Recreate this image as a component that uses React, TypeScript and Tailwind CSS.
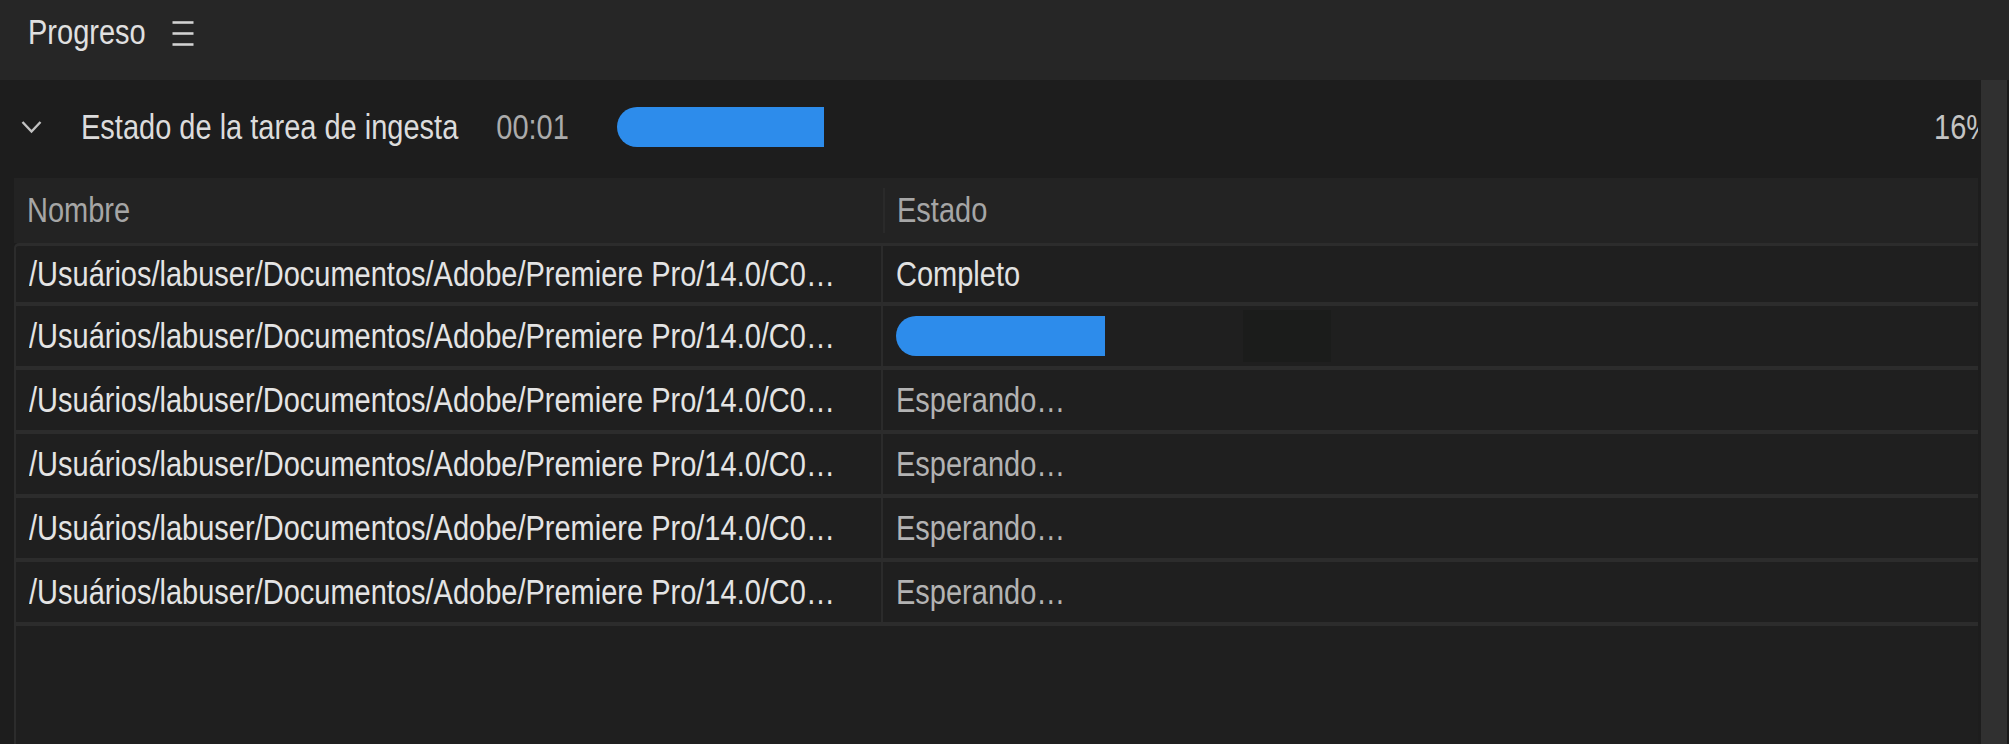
import React from "react";

const FONT = "font-['Liberation_Sans',Arial,sans-serif]";

const PATH = "/Usuários/labuser/Documentos/Adobe/Premiere Pro/14.0/C0…";

// the shot is horizontally squeezed, so glyphs are stretched a bit upward
const TXT = "inline-block scale-y-[1.2]";

type Row = { status: "done" | "running" | "waiting" };

const rows: Row[] = [
  { status: "done" },
  { status: "running" },
  { status: "waiting" },
  { status: "waiting" },
  { status: "waiting" },
  { status: "waiting" },
];

function MenuIcon() {
  return (
    <svg width="22" height="26" viewBox="0 0 22 26" className="mt-[2px]">
      <g stroke="#d2d2d2" strokeWidth="2.6" strokeLinecap="butt">
        <line x1="0.5" y1="2.5" x2="21.5" y2="2.5" />
        <line x1="0.5" y1="13.5" x2="21.5" y2="13.5" />
        <line x1="0.5" y1="24.5" x2="21.5" y2="24.5" />
      </g>
    </svg>
  );
}

function Chevron() {
  return (
    <svg width="21" height="14" viewBox="0 0 21 14" className="shrink-0">
      <polyline points="1.5,2 10.5,11.5 19.5,2" fill="none" stroke="#c2c2c2" strokeWidth="2.4" />
    </svg>
  );
}

function StatusCell({ status }: Row) {
  if (status === "done") return <span className={`${TXT} text-[#e2e2e2]`}>Completo</span>;
  if (status === "running")
    return (
      <div className="flex items-center">
        <div className="w-[209px] h-[40px] rounded-l-full bg-[#2d8ceb]" />
        {/* faint darker block in the shot */}
        <div className="ml-[138px] w-[88px] h-[52px] bg-[#1b1c1b]" />
      </div>
    );
  return <span className={`${TXT} text-[#b3b3b3]`}>Esperando…</span>;
}

export default function App() {
  return (
    <div className={`w-[2009px] h-[744px] flex flex-col overflow-hidden bg-[#1d1d1d] ${FONT} text-[29px] leading-none`}>
      {/* panel tab bar */}
      <div className="h-[80px] shrink-0 flex items-start pt-[18px] pl-[28px] bg-[#262626]">
        <span className={`${TXT} text-[#e0e0e0]`}>Progreso</span>
        <div className="ml-[26px]">
          <MenuIcon />
        </div>
      </div>

      <div className="flex-1 flex min-h-0">
        <div className="w-[1981px] shrink-0 flex flex-col overflow-hidden pr-[3px]">
          {/* task header */}
          <div className="h-[98px] shrink-0 flex items-center pl-[21px] pb-[4px] whitespace-nowrap">
            <Chevron />
            <span className={`${TXT} ml-[39px] text-[#dcdcdc]`}>Estado de la tarea de ingesta</span>
            <span className={`${TXT} ml-[38px] text-[#ababab]`}>00:01</span>
            <div className="ml-[48px] w-[207px] h-[40px] rounded-l-full bg-[#2d8ceb]" />
            <div className="ml-auto w-[44px] overflow-hidden">
              <span className={`${TXT} text-[#c4c4c4]`}>16%</span>
            </div>
          </div>

          {/* table */}
          <div className="ml-[14px] flex-1 flex flex-col min-h-0 whitespace-nowrap">
            <div className="h-[65px] shrink-0 flex items-center bg-[#232323] text-[#a6a6a6]">
              <div className="w-[869px] h-full flex items-center pl-[13px]">
                <span className={TXT}>Nombre</span>
              </div>
              <div className="w-[2px] h-[45px] bg-[#2a2a2a]" />
              <div className="pl-[12px]">
                <span className={TXT}>Estado</span>
              </div>
            </div>
            <div className="flex-1 flex flex-col border-l-2 border-t-[3px] border-[#2c2c2c] rounded-tl-[5px] bg-[#1f1f1f]">
              {rows.map((r, i) => (
                <div
                  key={i}
                  className={
                    i === 0
                      ? "h-[60px] shrink-0 flex border-b-4 border-[#2c2c2c]"
                      : "h-[64px] shrink-0 flex border-b-4 border-[#2c2c2c]"
                  }
                >
                  <div className="w-[867px] shrink-0 flex items-center pl-[13px] border-r-2 border-[#2b2b2b] text-[#e4e4e4]">
                    <span className={TXT}>{PATH}</span>
                  </div>
                  <div className="flex-1 flex items-center pl-[13px]">
                    <StatusCell status={r.status} />
                  </div>
                </div>
              ))}
            </div>
          </div>
        </div>
        {/* scrollbar track */}
        <div className="w-[26px] shrink-0 bg-[#303030]" />
        <div className="w-[2px] shrink-0 bg-[#1a1a1a]" />
      </div>
    </div>
  );
}
